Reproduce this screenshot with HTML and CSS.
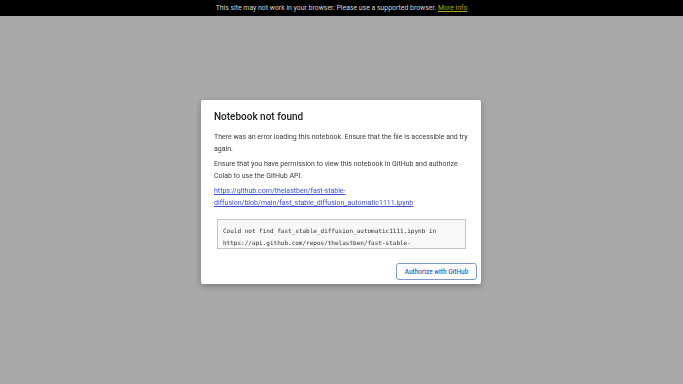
FILE: index.html
```html
<!DOCTYPE html>
<html lang="en">

<head>
    <meta charset="utf-8">
    <meta name="viewport" content="width=device-width, initial-scale=1.0">
    <title>Colab</title>
    <link rel="stylesheet" href="styles.css">
</head>

<body>
    <div class="overlay">
        <div class="dialog">
            <h2 class="titel">Notebook not found</h2>
            <p>There was an error loading this notebook. Ensure that the file is accessible and try again.</p>
            <p>Ensure that you have permission to view this notebook in GitHub and authorize Colab to use the GitHub API.</p>
            <p><a href="#" class="link">https://github.com/thelastben/fast-stable-diffusion/blob/main/fast_stable_diffusion_automatic1111.ipynb</a></p>
            <div class="fejl">Could not find fast_stable_diffusion_automatic1111.ipynb in https://api.github.com/repos/thelastben/fast-stable-</div>
            <div class="knapper">
                <button class="knap">Authorize with GitHub</button>
            </div>
        </div>
    </div>

    <div class="browserbar">
        This site may not work in your browser. Please use a supported browser.
        <a href="#">More info</a>
    </div>
</body>

</html>
```

FILE: styles.css
```css
body {
    margin: 0;
    background-color: #a9a9a9;
    font-family: Roboto, "Noto Sans", sans-serif;
}

.browserbar {
    position: fixed;
    top: 0;
    left: 0;
    right: 0;
    height: 16px;
    line-height: 16px;
    background-color: #000;
    color: #d4d4d4;
    font-size: 6.9px;
    text-align: center;
}

.browserbar a {
    color: #a8a822;
}

.overlay {
    position: fixed;
    inset: 0;
    display: flex;
    align-items: center;
    justify-content: center;
}

.dialog {
    width: 280px;
    box-sizing: border-box;
    padding: 10px 4px 4px 13px;
    margin-right: 1px;
    background-color: #fff;
    border-radius: 2px;
    box-shadow: 0 2px 6px rgba(0, 0, 0, 0.3);
}

.titel {
    margin: 0 0 7px;
    font-size: 10px;
    line-height: 14px;
    font-weight: 500;
    color: #202124;
}

p {
    margin: 0 9px 3px 0;
    font-size: 7px;
    line-height: 12px;
    color: #3c3c3c;
}

.link {
    color: #3a4fd0;
}

.fejl {
    margin: 10px 11px 14px 3px;
    padding: 5px 5px 0;
    height: 23px;
    overflow: hidden;
    background-color: #f8f8f8;
    border: 1px solid #c4c4c4;
    font-family: "DejaVu Sans Mono", monospace;
    font-size: 6px;
    line-height: 12px;
    color: #333;
}

.knapper {
    display: flex;
    justify-content: flex-end;
}

.knap {
    width: 81px;
    height: 17px;
    padding: 0;
    background-color: #fff;
    border: 1.5px solid #7b97cc;
    border-radius: 3px;
    color: #3367b5;
    font-family: Roboto, sans-serif;
    font-size: 6.5px;
    font-weight: 500;
}
```
